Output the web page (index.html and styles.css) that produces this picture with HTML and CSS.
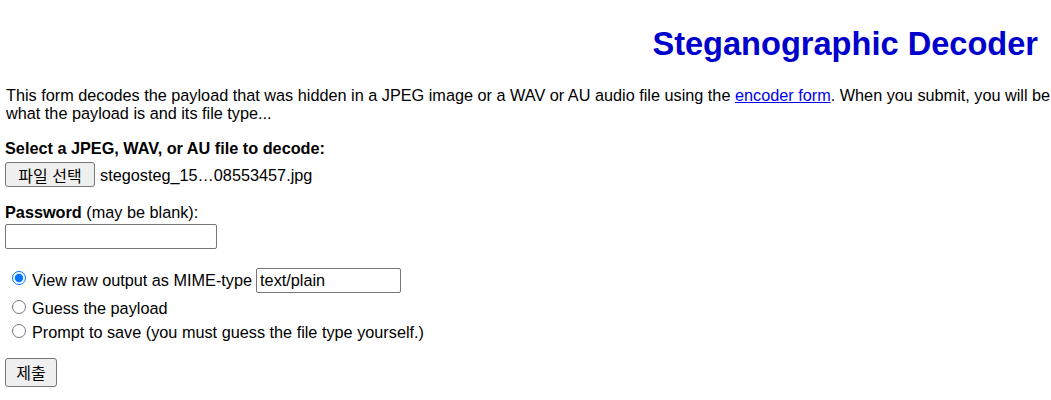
FILE: index.html
```html
<!DOCTYPE html>
<html lang="en">
<head>
<meta charset="utf-8">
<title>Steganographic Decoder</title>
<link rel="stylesheet" href="styles.css">
</head>
<body>
<div class="page">
  <h1 class="title">Steganographic Decoder</h1>
  <p class="intro">This form decodes the payload that was hidden in a JPEG image or a WAV or AU audio file using the <a href="#">encoder form</a>. When you submit, you will be<br>what the payload is and its file type...</p>
  <form class="form">
    <div class="field">
      <div class="label"><b>Select a JPEG, WAV, or AU file to decode:</b></div>
      <div class="file-row">
        <button type="button" class="btn file-btn">파일 선택</button>
        <span class="file-name">stegosteg_15…08553457.jpg</span>
      </div>
    </div>
    <div class="field">
      <div class="label"><b>Password</b> (may be blank):</div>
      <input type="password" class="text-input pw-input">
    </div>
    <div class="options">
      <label class="opt opt-first">
        <input type="radio" name="mode" class="radio" checked>
        <span>View raw output as MIME-type</span>
        <input type="text" class="text-input mime-input" value="text/plain">
      </label>
      <label class="opt">
        <input type="radio" name="mode" class="radio">
        <span>Guess the payload</span>
      </label>
      <label class="opt">
        <input type="radio" name="mode" class="radio">
        <span>Prompt to save (you must guess the file type yourself.)</span>
      </label>
    </div>
    <button type="submit" class="btn submit-btn">제출</button>
  </form>
</div>
</body>
</html>
```

FILE: styles.css
```css
html, body {
  margin: 0;
  padding: 0;
  background: #ffffff;
}

body {
  font-family: "Liberation Sans", Arial, "Noto Sans CJK KR", sans-serif;
  font-size: 16.25px;
  line-height: 18.4px;
  color: #000000;
}

.page {
  padding: 25px 0 0 5px;
}

.title {
  margin: 0;
  padding-right: 13px;
  text-align: right;
  font-size: 32.6px;
  line-height: 37px;
  font-weight: bold;
  color: #0000cc;
}

.intro {
  margin: 24px 0 0 0;
  padding-left: 1px;
  white-space: nowrap;
}

.intro a {
  color: #0000ee;
  text-decoration: underline;
}

.form {
  margin: 16px 0 0 0;
}

.field {
  margin-bottom: 16px;
}

.label {
  line-height: 18.4px;
}

.file-row {
  display: flex;
  align-items: center;
  margin-top: 5px;
  height: 25px;
}

.btn {
  font-family: "Liberation Sans", "Noto Sans CJK KR", sans-serif;
  font-size: 16px;
  color: #000000;
  background: #efefef;
  border: 1px solid #767676;
  border-radius: 3px;
  padding: 0;
  margin: 0;
  display: flex;
  align-items: center;
  justify-content: center;
}

.file-btn {
  width: 90px;
  height: 25px;
}

.file-name {
  margin-left: 5px;
}

.text-input {
  font-family: "Liberation Sans", Arial, sans-serif;
  font-size: 16.25px;
  color: #000000;
  background: #ffffff;
  border: 1px solid #767676;
  border-radius: 2px;
  margin: 0;
  padding: 0 3px;
  box-sizing: border-box;
  height: 25px;
}

.pw-input {
  display: block;
  width: 212px;
  margin-top: 2px;
}

.options {
  margin-top: 19px;
}

.opt {
  display: flex;
  align-items: center;
  height: 24px;
}

.opt-first {
  height: 25px;
  margin-bottom: 4px;
}

.radio {
  width: 14px;
  height: 14px;
  margin: 0 6px 4px 7px;
  accent-color: #0075ff;
}

.mime-input {
  width: 145px;
  margin-left: 4px;
}

.submit-btn {
  margin-top: 13px;
  width: 52px;
  height: 29px;
}
```
